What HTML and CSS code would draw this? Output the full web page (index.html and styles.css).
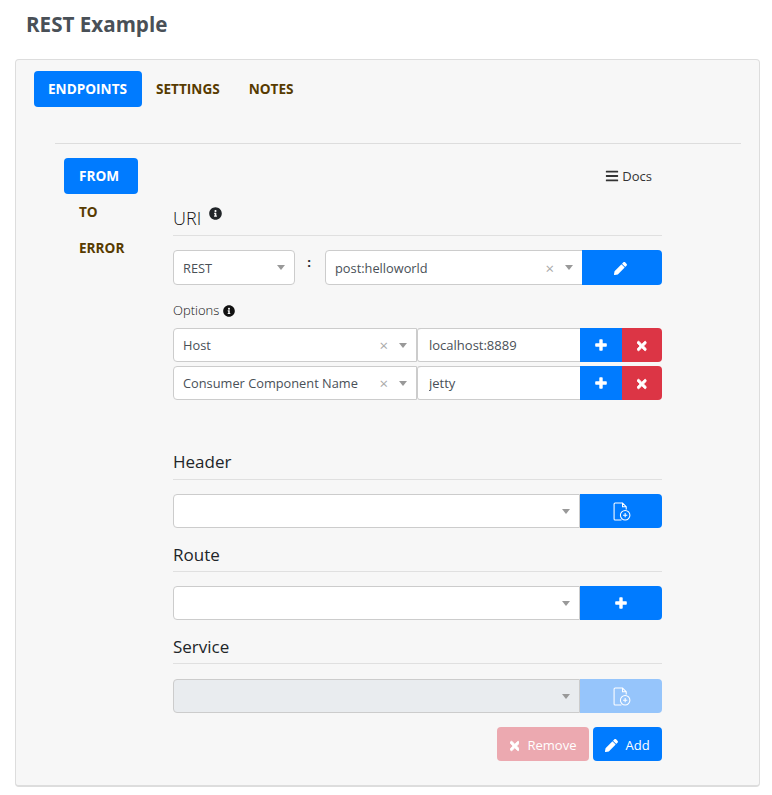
FILE: index.html
```html
<!DOCTYPE html>
<html lang="en">
<head>
    <meta charset="UTF-8">
    <title>REST Example</title>
    <link rel="stylesheet" href="styles.css">
</head>
<body>
    <svg class="icon-defs" xmlns="http://www.w3.org/2000/svg">
        <symbol id="i-info" viewBox="0 0 512 512"><path d="M256 8C119 8 8 119 8 256s111 248 248 248 248-111 248-248S393 8 256 8zm0 110c23.200 0 42 18.800 42 42s-18.800 42-42 42-42-18.800-42-42 18.800-42 42-42zm56 254c0 6.600-5.400 12-12 12h-88c-6.600 0-12-5.400-12-12v-24c0-6.600 5.400-12 12-12h12v-64h-12c-6.600 0-12-5.400-12-12v-24c0-6.600 5.400-12 12-12h64c6.600 0 12 5.400 12 12v100h12c6.600 0 12 5.400 12 12v24z"/></symbol>
        <symbol id="i-pencil" viewBox="0 0 512 512"><path d="M497.900 142.100l-46.100 46.100c-4.700 4.700-12.300 4.700-17 0l-111-111c-4.700-4.700-4.700-12.300 0-17l46.100-46.100c18.700-18.700 49.100-18.700 67.900 0l60.100 60.100c18.800 18.700 18.800 49.100 0 67.900zM284.200 99.800L21.600 362.400.4 483.900c-2.900 16.400 11.400 30.600 27.800 27.800l121.500-21.300 262.600-262.600c4.700-4.700 4.700-12.300 0-17l-111-111c-4.800-4.700-12.400-4.700-17.100 0z"/></symbol>
        <symbol id="i-plus" viewBox="0 0 12 12"><path d="M4.300 1a.8.8 0 0 1 .8-.8h1.800a.8.8 0 0 1 .8.8v3.300H11a.8.8 0 0 1 .8.8v1.800a.8.8 0 0 1-.8.8H7.700V11a.8.8 0 0 1-.8.8H5.100a.8.8 0 0 1-.8-.8V7.700H1a.8.8 0 0 1-.8-.8V5.100a.8.8 0 0 1 .8-.8h3.300z"/></symbol>
        <symbol id="i-times" viewBox="0 0 352 512"><path class="thick" d="M242.700 256l100.100-100.100c12.300-12.300 12.300-32.200 0-44.500l-22.200-22.200c-12.300-12.300-32.200-12.300-44.500 0L176 189.300 75.900 89.200c-12.300-12.300-32.200-12.300-44.500 0L9.200 111.500c-12.300 12.300-12.300 32.200 0 44.500L109.300 256 9.200 356.100c-12.300 12.300-12.300 32.200 0 44.500l22.200 22.200c12.300 12.300 32.200 12.300 44.500 0L176 322.700l100.100 100.100c12.300 12.300 32.200 12.300 44.500 0l22.200-22.200c12.300-12.300 12.300-32.200 0-44.500L242.700 256z"/></symbol>
        <symbol id="i-bars" viewBox="0 0 448 512"><path d="M16 132h416c8.800 0 16-7.200 16-16V76c0-8.800-7.200-16-16-16H16C7.200 60 0 67.200 0 76v40c0 8.800 7.200 16 16 16zm0 160h416c8.800 0 16-7.200 16-16v-40c0-8.800-7.200-16-16-16H16c-8.800 0-16 7.200-16 16v40c0 8.800 7.200 16 16 16zm0 160h416c8.800 0 16-7.200 16-16v-40c0-8.800-7.200-16-16-16H16c-8.800 0-16 7.200-16 16v40c0 8.800 7.200 16 16 16z"/></symbol>
        <symbol id="i-file-add" viewBox="0 0 17 18"><path class="thin" d="M8 17H2a1 1 0 0 1-1-1V2a1 1 0 0 1 1-1h7l3.500 3.500V7M9 1v3.500h3.500"/><circle class="thin" cx="11.500" cy="12.500" r="4.500"/><path class="thin" d="M9.500 12.500h4M11.500 10.500v4"/></symbol>
    </svg>

    <h1 class="page-title">REST Example</h1>

    <div class="card">
        <ul class="tabs">
            <li class="tab active">ENDPOINTS</li>
            <li class="tab">SETTINGS</li>
            <li class="tab">NOTES</li>
        </ul>

        <div class="tab-body">
            <ul class="side-tabs">
                <li class="side-tab active">FROM</li>
                <li class="side-tab">TO</li>
                <li class="side-tab">ERROR</li>
            </ul>

            <div class="panel">
                <div class="docs"><svg class="icon"><use href="#i-bars"/></svg> Docs</div>

                <h2 class="section-title low-title uri-title">URI <svg class="icon info-big"><use href="#i-info"/></svg></h2>
                <div class="uri-row">
                    <div class="select select-scheme"><span class="select-value">REST</span><span class="caret"></span></div>
                    <span class="colon">:</span>
                    <div class="select select-uri joined-right"><span class="select-value">post:helloworld</span><span class="clear">×</span><span class="caret"></span></div>
                    <button class="btn btn-blue btn-edit" type="button"><svg class="icon"><use href="#i-pencil"/></svg></button>
                </div>

                <div class="options-label">Options <svg class="icon"><use href="#i-info"/></svg></div>
                <div class="option-row">
                    <div class="select select-option joined-right"><span class="select-value">Host</span><span class="clear">×</span><span class="caret"></span></div>
                    <input class="text-input" type="text" value="localhost:8889">
                    <button class="btn btn-blue btn-square" type="button"><svg class="icon icon-plus"><use href="#i-plus"/></svg></button>
                    <button class="btn btn-red btn-square" type="button"><svg class="icon icon-times"><use href="#i-times"/></svg></button>
                </div>
                <div class="option-row">
                    <div class="select select-option joined-right"><span class="select-value">Consumer Component Name</span><span class="clear">×</span><span class="caret"></span></div>
                    <input class="text-input" type="text" value="jetty">
                    <button class="btn btn-blue btn-square" type="button"><svg class="icon icon-plus"><use href="#i-plus"/></svg></button>
                    <button class="btn btn-red btn-square" type="button"><svg class="icon icon-times"><use href="#i-times"/></svg></button>
                </div>

                <h2 class="section-title header-title">Header</h2>
                <div class="add-row">
                    <div class="select joined-right"><span class="select-value"></span><span class="caret"></span></div>
                    <button class="btn btn-blue btn-add-wide" type="button"><svg class="icon icon-file"><use href="#i-file-add"/></svg></button>
                </div>

                <h2 class="section-title low-title">Route</h2>
                <div class="add-row">
                    <div class="select joined-right"><span class="select-value"></span><span class="caret"></span></div>
                    <button class="btn btn-blue btn-add-wide" type="button"><svg class="icon icon-plus"><use href="#i-plus"/></svg></button>
                </div>

                <h2 class="section-title low-title service-title">Service</h2>
                <div class="add-row">
                    <div class="select joined-right disabled"><span class="select-value"></span><span class="caret"></span></div>
                    <button class="btn btn-blue btn-add-wide faded" type="button" disabled><svg class="icon icon-file"><use href="#i-file-add"/></svg></button>
                </div>

                <div class="actions">
                    <button class="btn btn-action btn-remove faded-red" type="button" disabled><svg class="icon icon-times"><use href="#i-times"/></svg> Remove</button>
                    <button class="btn btn-blue btn-action" type="button"><svg class="icon"><use href="#i-pencil"/></svg> Add</button>
                </div>
            </div>
        </div>
    </div>
</body>
</html>
```

FILE: styles.css
```css
* {
    box-sizing: border-box;
}
body {
    font-family: "Open Sans", "Noto Sans", sans-serif;
    font-size: 13px;
    color: #495057;
    background-color: #fff;
    margin: 0;
    padding: 0 12px 8px 15px;
}
.icon-defs {
    display: none;
}
.icon {
    width: 14px;
    height: 14px;
    fill: currentColor;
    vertical-align: -2px;
}
.thin {
    fill: none;
    stroke: currentColor;
    stroke-width: 1;
}
.thick {
    stroke: currentColor;
    stroke-width: 28;
}
.page-title {
    font-size: 20.6px;
    font-weight: 700;
    line-height: 27px;
    color: #495057;
    margin: 0 0 23px 11px;
    padding-top: 11px;
    height: 36px;
}
.card {
    background-color: #f7f7f7;
    border: 1px solid #ddd;
    border-bottom-width: 2px;
    border-radius: 4px;
    width: 745px;
    height: 728px;
    padding: 11px 18px 0 18px;
}
.tabs, .side-tabs {
    list-style: none;
    margin: 0;
    padding: 0;
}
.tabs {
    display: flex;
}
.tab {
    height: 36px;
    line-height: 36px;
    padding: 0 14px;
    font-size: 13.6px;
    font-weight: 700;
    color: #573b00;
    border-radius: 4px;
    margin-right: 1px;
}
.tab.active {
    width: 108px;
    margin-right: 0;
}
.tab.active, .side-tab.active {
    background-color: #007bff;
    color: #fff;
}
.tab-body {
    display: flex;
    margin: 36px 0 0 21px;
    border-top: 1px solid #ddd;
    padding: 14px 0 0 9px;
}
.side-tabs {
    width: 74px;
    margin-right: 35px;
}
.side-tab {
    height: 36px;
    line-height: 36px;
    padding-left: 15px;
    font-size: 13.6px;
    font-weight: 700;
    color: #573b00;
    border-radius: 4px;
}
.panel {
    width: 489px;
}
.docs {
    height: 36px;
    line-height: 36px;
    text-align: right;
    padding-right: 10px;
    color: #333;
    font-size: 13px;
}
.section-title {
    font-size: 17px;
    font-weight: 400;
    line-height: 23px;
    color: #212529;
    margin: 0 0 14px;
    padding-bottom: 5px;
    border-bottom: 1px solid #e0e0e0;
    height: 30px;
}
.low-title {
    padding-top: 1px;
    padding-bottom: 4px;
}
.uri-title {
    margin-top: 12px;
    font-size: 18px;
    font-weight: 300;
    color: #111;
}
.header-title {
    margin-top: 50px;
}
.service-title {
    margin-bottom: 15px;
}
.info-big {
    width: 13px;
    height: 13px;
    margin-left: 3px;
    vertical-align: 5px;
    color: #212529;
}
.uri-row {
    display: flex;
    height: 35px;
}
.select {
    display: flex;
    align-items: center;
    flex: 1;
    background-color: #fff;
    border: 1px solid #ccc;
    border-radius: 4px;
    padding: 0 9px;
    min-width: 0;
    font-size: 12.8px;
}
.joined-right {
    border-radius: 4px 0 0 4px;
}
.select.disabled {
    background-color: #e9ecef;
}
.select-scheme {
    flex: none;
    width: 122px;
}
.select-uri {
    flex: none;
    width: 258px;
    margin-right: -1px;
}
.select-option {
    flex: none;
    width: 244px;
}
.select-value {
    flex: 1;
    white-space: nowrap;
}
.clear {
    color: #aaa;
    font-size: 15px;
    margin-right: 10px;
}
.caret {
    border-style: solid;
    border-width: 5px 4px 0;
    border-color: #999 transparent transparent;
    margin-left: 1px;
}
.colon {
    width: 30px;
    padding-right: 2px;
    text-align: center;
    font-weight: 700;
    color: #212529;
    line-height: 24px;
}
.btn {
    border: none;
    border-radius: 0;
    color: #fff;
    font-family: inherit;
    font-size: 13px;
    padding: 0;
}
.btn-blue {
    background-color: #007bff;
}
.btn-red {
    background-color: #dc3545;
}
.btn-edit {
    width: 80px;
    padding-right: 3px;
    border-radius: 0 4px 4px 0;
}
.btn-edit .icon {
    width: 13px;
    height: 13px;
}
.options-label {
    margin: 16px 0 8px;
    height: 19px;
    line-height: 19px;
    color: #111;
    font-weight: 300;
}
.options-label .icon {
    width: 12px;
    height: 12px;
}
.option-row {
    display: flex;
    height: 34px;
    margin-bottom: 4px;
}
.text-input {
    width: 163px;
    border: 1px solid #ccc;
    border-left: none;
    border-right: none;
    background-color: #fff;
    padding: 0 12px;
    font-family: inherit;
    font-size: 13px;
    color: #495057;
    border-radius: 3px 0 0 3px;
    box-shadow: inset 1px 0 0 #ccc;
}
.btn-square {
    width: 42px;
}
.btn-square.btn-red {
    width: 40px;
    border-radius: 0 4px 4px 0;
}
.icon-plus {
    width: 12px;
    height: 12px;
    vertical-align: -1px;
}
.icon-times {
    height: 14px;
    width: 9.600px;
    vertical-align: -3px;
}
.add-row {
    display: flex;
    height: 34px;
    margin-bottom: 14px;
}
.btn-add-wide {
    width: 82px;
    border-radius: 0 4px 4px 0;
}
.icon-file {
    width: 18px;
    height: 19px;
    margin-left: 2px;
    vertical-align: -5px;
}
.faded {
    background-color: #96c5fb;
}
.faded-red {
    background-color: #eca9b0;
}
.actions {
    display: flex;
    justify-content: flex-end;
    gap: 4px;
}
.btn-action {
    height: 34px;
    width: 69px;
    padding-top: 1px;
    border-radius: 4px;
}
.btn-remove {
    width: 92px;
}
.btn-action .icon {
    width: 13px;
    height: 13px;
    margin-right: 4px;
}
.btn-action .icon-times {
    width: 9.600px;
    height: 14px;
    margin-right: 5px;
}
```
